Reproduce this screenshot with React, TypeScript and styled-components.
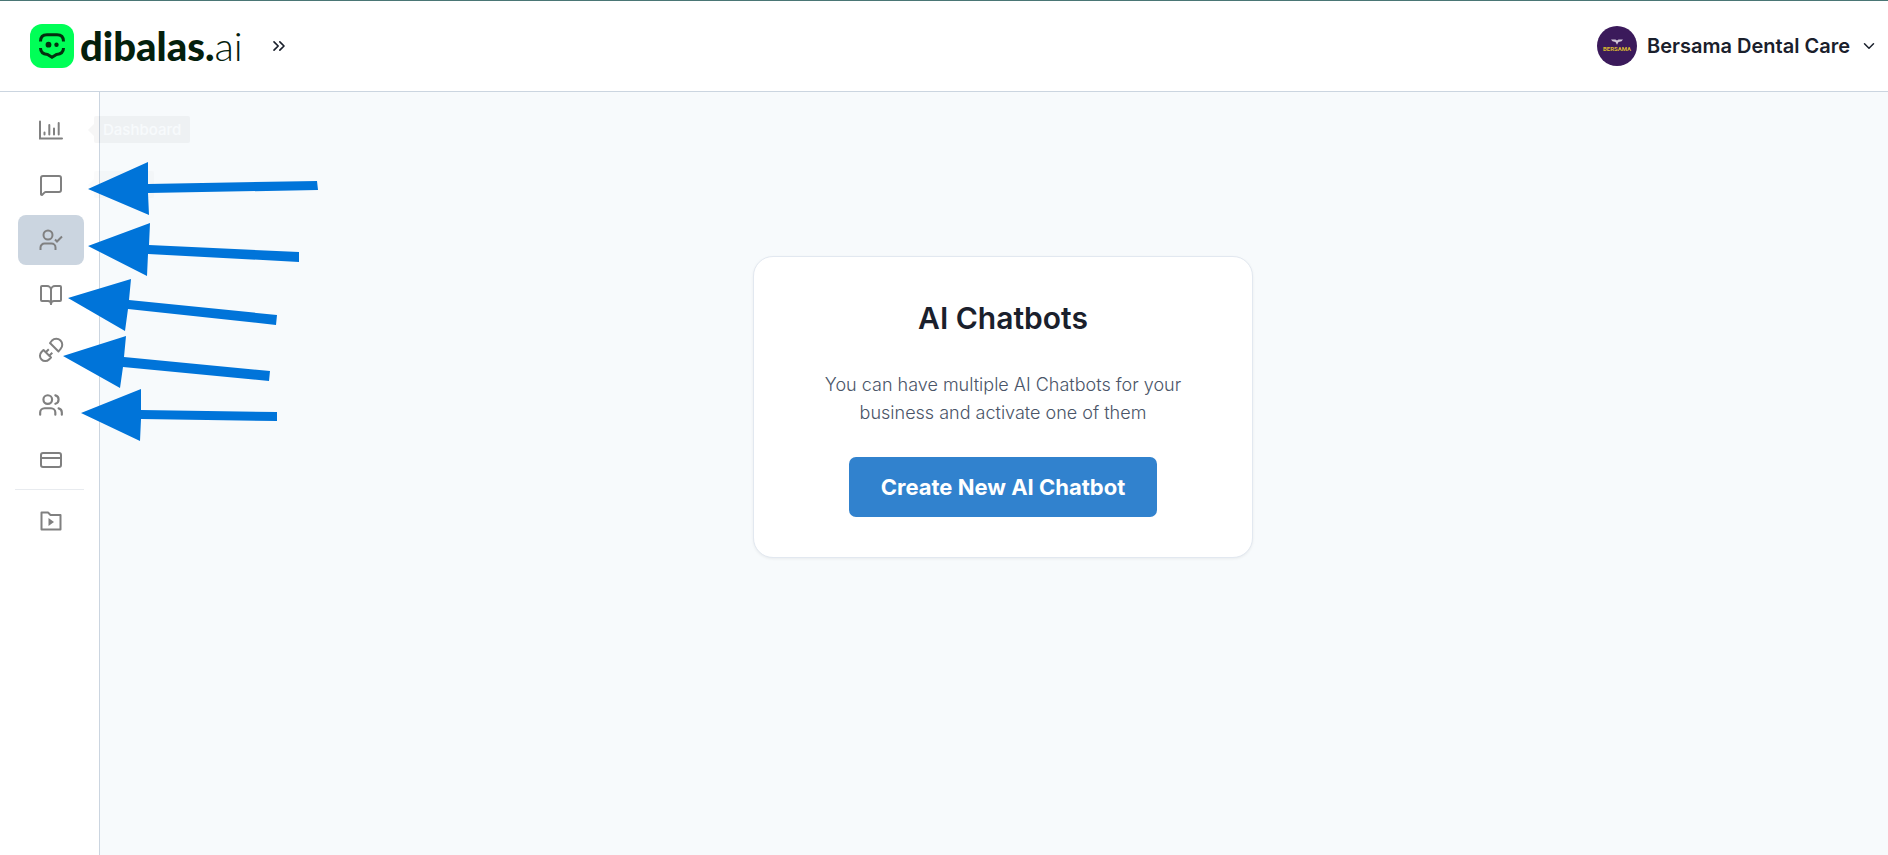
import React from 'react';
import styled, { createGlobalStyle } from 'styled-components';
import { BookOpen, ChevronDown, ChevronsRight, CreditCard, MessageSquare, Users } from 'lucide-react';

const GlobalStyle = createGlobalStyle`
  *, *::before, *::after { box-sizing: border-box; }
  body {
    margin: 0;
    background: #f7fafc;
    color: #1a202c;
    font-family: Inter, sans-serif;
  }
`;

const Page = styled.div`
  position: relative;
  display: flex;
  flex-direction: column;
  min-height: 100vh;
  overflow: hidden;
`;

const Header = styled.header`
  display: flex;
  align-items: center;
  justify-content: space-between;
  height: 92px;
  padding: 0 10px 0 30px;
  background: #ffffff;
  border-top: 1px solid #4a7675;
  border-bottom: 1px solid #cbd5e0;
`;

const Brand = styled.div`
  display: flex;
  align-items: center;
  gap: 26px;
`;

const LogoLink = styled.a`
  display: flex;
  align-items: center;
  gap: 6px;
  color: #04200c;
  text-decoration: none;
`;

const Wordmark = styled.span`
  font-family: Lato, sans-serif;
  font-size: 40px;
  line-height: 42px;
  font-weight: 900;
`;

const WordmarkSuffix = styled.span`
  font-weight: 300;
`;

const IconButton = styled.button`
  display: flex;
  padding: 0;
  border: 0;
  background: none;
  color: #1a202c;
  cursor: pointer;
`;

const AccountButton = styled.button`
  display: flex;
  align-items: center;
  gap: 10px;
  padding: 0;
  border: 0;
  background: none;
  color: #1a202c;
  font: 600 20px/28px Inter, sans-serif;
  cursor: pointer;
`;

const Avatar = styled.span`
  display: flex;
  flex-direction: column;
  align-items: center;
  justify-content: center;
  width: 40px;
  height: 40px;
  border-radius: 50%;
  background: #3b1a5b;
  color: #d9b92f;
  font: 700 6px/8px Roboto, sans-serif;
`;

const Body = styled.div`
  display: flex;
  flex: 1;
`;

const Sidebar = styled.nav`
  width: 100px;
  padding: 13px 15px 0 18px;
  background: #ffffff;
  border-right: 1px solid #cbd5e0;
`;

const NavList = styled.ul`
  display: flex;
  flex-direction: column;
  gap: 5px;
  margin: 0;
  padding: 0;
  list-style: none;
`;

const NavItem = styled.li`
  position: relative;
`;

const NavLink = styled.a<{ $active?: boolean }>`
  display: flex;
  align-items: center;
  justify-content: center;
  height: 50px;
  border-radius: 8px;
  background: ${({ $active }) => ($active ? '#cbd5e0' : 'transparent')};
  color: #808080;
`;

const Divider = styled.hr`
  height: 1px;
  margin: 4px 0 6px -3px;
  border: 0;
  background: #e8ebef;
`;

const Tooltip = styled.span<{ $opacity: number }>`
  position: absolute;
  top: 11px;
  left: 76px;
  padding: 0 9px;
  border-radius: 2px;
  background: #1a202c;
  color: #ffffff;
  font-size: 15px;
  line-height: 27px;
  font-weight: 500;
  opacity: ${({ $opacity }) => $opacity};
  pointer-events: none;

  &::before {
    content: '';
    position: absolute;
    top: 8px;
    right: 100%;
    border: 6px solid transparent;
    border-left-width: 0;
    border-right-color: #1a202c;
  }
`;

const Content = styled.main`
  display: flex;
  flex: 1;
  align-items: flex-start;
  justify-content: center;
  padding: 164px 0 40px 18px;
`;

const Card = styled.section`
  display: flex;
  flex-direction: column;
  align-items: center;
  width: 500px;
  padding: 40px 64px;
  border: 1px solid #e2e8f0;
  border-radius: 20px;
  background: #ffffff;
  box-shadow: 0 1px 3px rgba(0, 0, 0, 0.06);
  text-align: center;
`;

const Title = styled.h1`
  margin: 0 0 32px;
  font-size: 30px;
  line-height: 42px;
  font-weight: 600;
`;

const Description = styled.p`
  margin: 0 0 30px;
  color: #4a5568;
  font-size: 18px;
  line-height: 28px;
  font-weight: 300;
`;

const PrimaryButton = styled.button`
  height: 60px;
  padding: 0 32px;
  border: 0;
  border-radius: 7px;
  background: #3182ce;
  color: #ffffff;
  font: 700 22px/30px Inter, sans-serif;
  cursor: pointer;
`;

const Annotations = styled.svg`
  position: absolute;
  top: 0;
  left: 0;
  pointer-events: none;
`;

const LogoMark = () => (
  <svg width="44" height="44" viewBox="0 0 44 44" aria-hidden="true">
    <rect width="44" height="44" rx="12" fill="#00ff57" />
    <g fill="none" stroke="#04300f" strokeWidth="3">
      <path d="M10.500 17.500c0-4.500 2.500-6.700 6.500-6.700h10c4 0 6.500 2.200 6.500 6.700" />
      <path d="M10.500 24c0 4 2.500 6 7 6.500l4.500 2.800 4.500-2.800c4.500-.5 7-2.500 7-6.500" />
    </g>
    <circle cx="18.500" cy="20.700" r="2.900" fill="#04300f" />
    <circle cx="26.500" cy="20.700" r="2.200" fill="#04300f" />
  </svg>
);

const WingsMark = () => (
  <svg width="12" height="6" viewBox="0 0 12 6" aria-hidden="true">
    <path d="M0 .5h4.500L6 1.500 7.500.5H12L10.500 2.300 7.500 3 6 5.800 4.500 3 1.500 2.300z" fill="#cfc6d8" />
  </svg>
);

const ChartIcon = () => (
  <svg width="26" height="22" viewBox="0 0 26 22" fill="none" stroke="currentColor" strokeWidth="2" strokeLinecap="round" aria-hidden="true">
    <path d="M2 2.500v17h22M6.500 13.500v2M11.300 6v9.500M16 9.500v6M20.700 4v11.500" />
  </svg>
);

const UserCheckIcon = () => (
  <svg width="24" height="24" viewBox="0 0 24 24" fill="none" stroke="currentColor" strokeWidth="2" aria-hidden="true">
    <circle cx="9" cy="7" r="4.500" />
    <path d="M1.500 22v-2.500a4 4 0 0 1 4-4h7a4 4 0 0 1 4 4V22M16 11.500l2 2 5-5" />
  </svg>
);

const PlugIcon = () => (
  <svg width="26" height="26" viewBox="0 0 26 26" fill="none" stroke="currentColor" strokeWidth="2" strokeLinejoin="round" aria-hidden="true">
    <path d="M12 6l8.500 8.500 2-2.500a6 6 0 0 0-8.500-8.500z" />
    <path d="M5.500 13l7.500 7.500-2 2a5.300 5.300 0 0 1-7.500-7.500z" />
    <path d="M8 15l2.800-2.800M11.500 18.500l2.800-2.800" />
  </svg>
);

const FolderPlayIcon = () => (
  <svg width="22" height="20" viewBox="0 0 22 20" fill="none" stroke="currentColor" strokeWidth="2" strokeLinejoin="round" aria-hidden="true">
    <path d="M1.500 1.500h6.500l2.500 2.500h10v14.500h-19z" />
    <path d="M8.500 7v8l5.500-4z" fill="currentColor" stroke="none" />
  </svg>
);

const navItems = [
  { label: 'Dashboard', icon: <ChartIcon />, tooltip: 0.035 },
  { label: 'Chats', icon: <MessageSquare size={24} />, tooltip: 0.01 },
  { label: 'AI Chatbots', icon: <UserCheckIcon />, active: true },
  { label: 'Knowledge', icon: <BookOpen size={24} /> },
  { label: 'Integrations', icon: <PlugIcon /> },
  { label: 'Contacts', icon: <Users size={26} /> },
  { label: 'Billing', icon: <CreditCard size={24} /> },
];

const arrows = [
  '88,189 148,162 148,184 317,181 318,190 148,193 149,215',
  '88,246 150,223 149,245 299,252 299,262 148,254 147,276',
  '68,298 131,279 129,300 277,315 276,325 128,309 125,331',
  '63,356 126,336 124,357 270,371 269,381 123,367 120,388',
  '81,413 141,389 141,410 277,412 277,421 141,419 140,441',
];

export default function App() {
  return (
    <>
      <GlobalStyle />
      <Page>
        <Header>
          <Brand>
            <LogoLink href="#">
              <LogoMark />
              <Wordmark>dibalas.<WordmarkSuffix>ai</WordmarkSuffix></Wordmark>
            </LogoLink>
            <IconButton type="button" aria-label="Expand menu">
              <ChevronsRight size={20} />
            </IconButton>
          </Brand>
          <AccountButton type="button">
            <Avatar><WingsMark />BERSAMA</Avatar>
            <span>Bersama Dental Care</span>
            <ChevronDown size={18} />
          </AccountButton>
        </Header>
        <Body>
          <Sidebar>
            <NavList>
              {navItems.map(({ label, icon, active, tooltip }) => (
                <NavItem key={label}>
                  <NavLink href="#" aria-label={label} $active={active}>{icon}</NavLink>
                  {tooltip && <Tooltip $opacity={tooltip}>{label}</Tooltip>}
                </NavItem>
              ))}
            </NavList>
            <Divider />
            <NavLink href="#" aria-label="Tutorials"><FolderPlayIcon /></NavLink>
          </Sidebar>
          <Content>
            <Card>
              <Title>AI Chatbots</Title>
              <Description>You can have multiple AI Chatbots for your business and activate one of them</Description>
              <PrimaryButton type="button">Create New AI Chatbot</PrimaryButton>
            </Card>
          </Content>
        </Body>
        <Annotations width="330" height="450" viewBox="0 0 330 450" fill="#0074d9" aria-hidden="true">
          {arrows.map((points) => <polygon key={points} points={points} />)}
        </Annotations>
      </Page>
    </>
  );
}
